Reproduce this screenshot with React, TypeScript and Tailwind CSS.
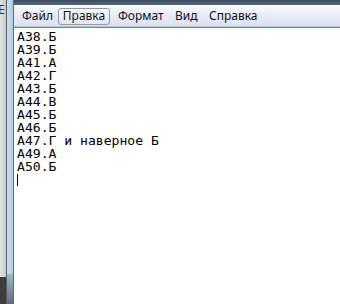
import React from "react";

const lines = [
  "A38.Б",
  "A39.Б",
  "A41.А",
  "A42.Г",
  "A43.Б",
  "A44.В",
  "A45.Б",
  "A46.Б",
  "A47.Г и наверное Б",
  "A49.А",
  "A50.Б",
];

export default function App() {
  return (
    <div className="w-[340px] h-[304px] overflow-hidden flex bg-white">
      {/* background window sliver */}
      <div className="w-[6px] h-full flex flex-col">
        <div className="flex-1 bg-gradient-to-r from-[#e4e4e4] to-[#c9c9c9] relative overflow-hidden">
          <span
            className="absolute left-[-2px] top-[3px] text-[12px] leading-[13px] text-[#333]"
            style={{ fontFamily: '"Noto Sans", sans-serif' }}
          >
            E
          </span>
        </div>
        <div className="h-[27px] bg-[#3e3e3e]" />
      </div>
      <div className="w-[1px] h-full bg-[#5a5a5a]" />
      {/* window frame */}
      <div className="w-[6px] h-full flex flex-col">
        <div className="flex-1 bg-gradient-to-r from-[#cfe0f2] to-[#aecbea]" />
        <div className="h-[30px] bg-gradient-to-b from-[#9fb6cc] to-[#5a6e80]" />
      </div>
      <div className="w-[1px] h-full bg-[#5d6f80]" />
      {/* main window */}
      <div className="flex-1 flex flex-col">
        <div className="h-[5px] bg-gradient-to-b from-[#3c4c5c] to-[#55687a]" />
        <div className="h-[1px] bg-[#f4f6fa]" />
        <div
          className="h-[20px] flex items-center bg-gradient-to-b from-[#f8f9fc] via-[#e6eaf4] to-[#dbe2f0] text-[12px] text-[#111]"
          style={{ fontFamily: '"Noto Sans", "Liberation Sans", sans-serif' }}
        >
          <span className="ml-[8px] w-[36px]">Файл</span>
          <span className="w-[52px] h-[17px] flex items-center justify-center rounded-[3px] border border-[#8e98a6] bg-gradient-to-b from-[#f7f8fa] to-[#e3e7ee]">
            Правка
          </span>
          <span className="ml-[8px] w-[57px]">Формат</span>
          <span className="w-[34px]">Вид</span>
          <span>Справка</span>
        </div>
        <div className="h-[1px] bg-[#b9c2cf]" />
        <div className="h-[1px] bg-[#6f8a9a]" />
        <div
          className="flex-1 pl-[3px] pt-[2px] text-[13.1px] leading-[13px] text-black"
          style={{ fontFamily: '"DejaVu Sans Mono", monospace' }}
        >
          {lines.map((l, i) => (
            <div key={i} className="whitespace-pre">
              {l}
            </div>
          ))}
          <div className="w-[1px] h-[12px] bg-black mt-[1px]" />
        </div>
      </div>
    </div>
  );
}
